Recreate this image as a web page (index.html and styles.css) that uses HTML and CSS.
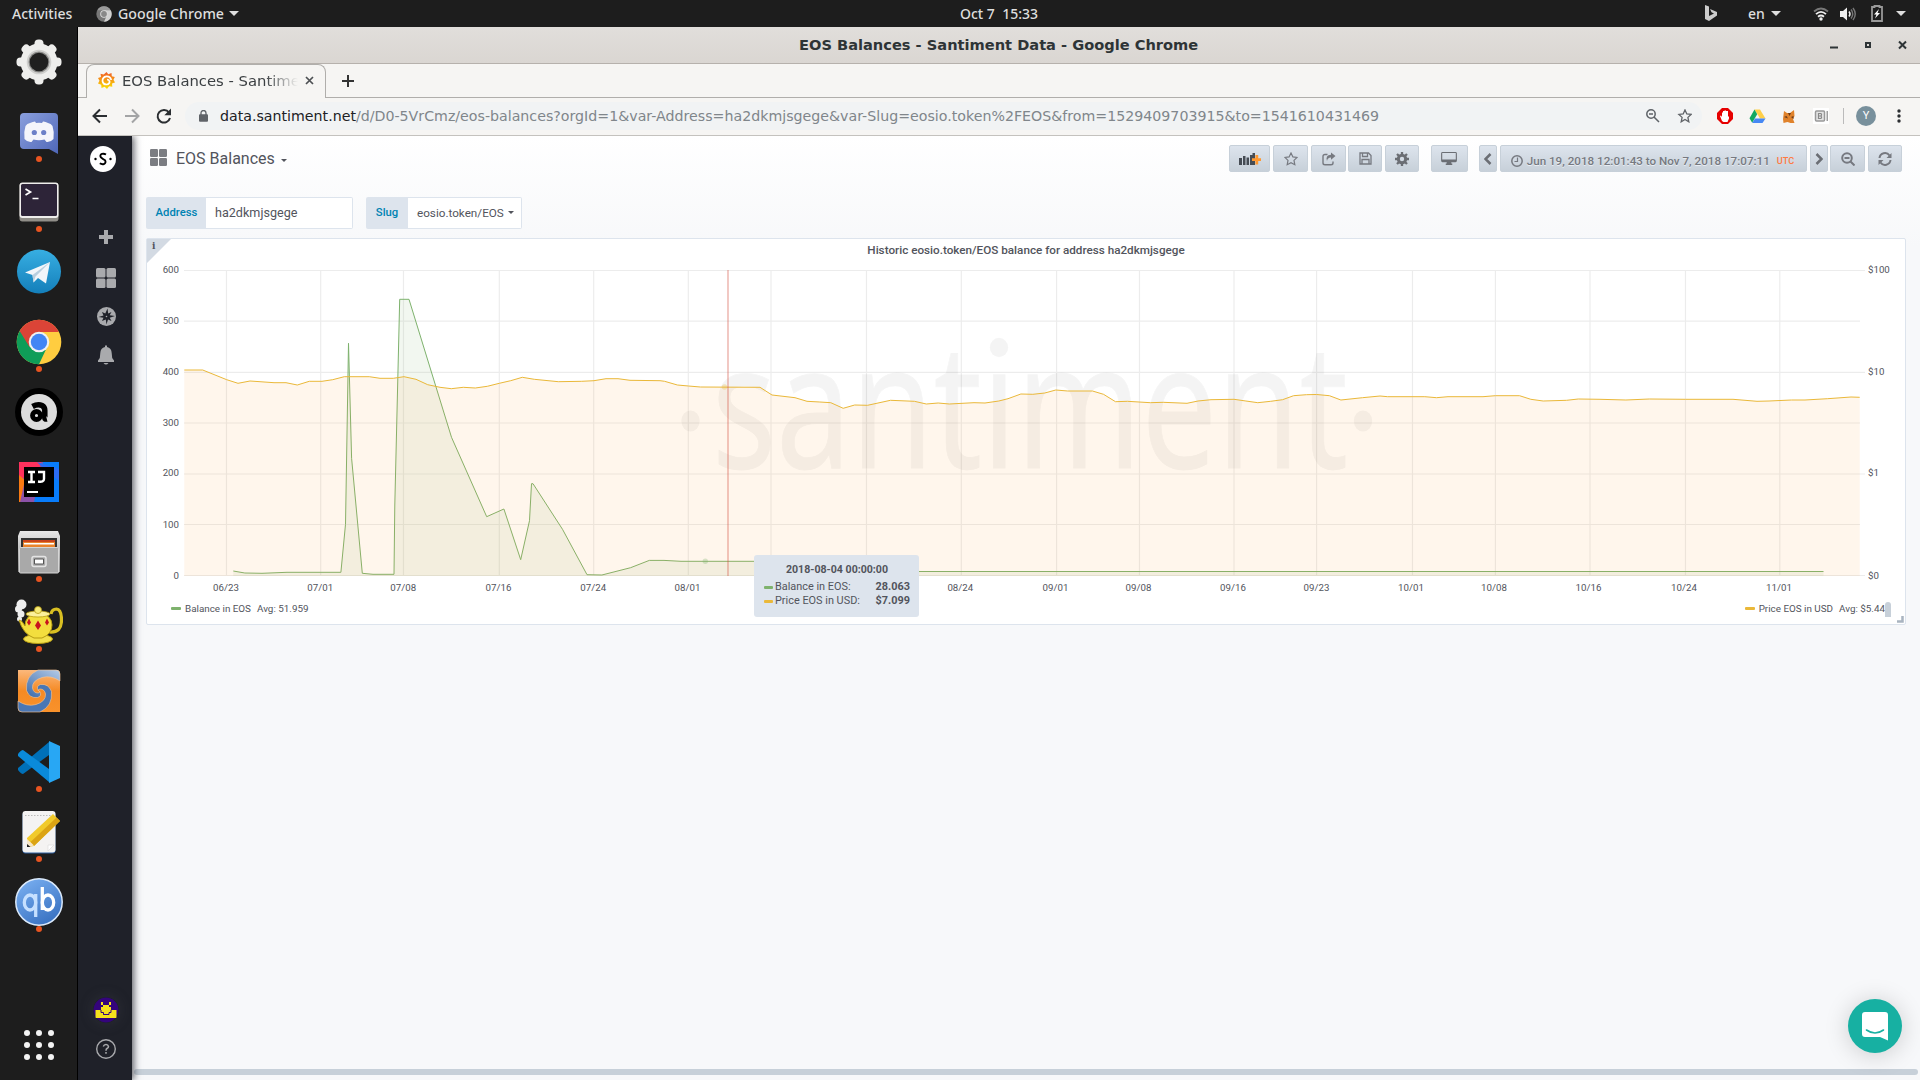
FILE: index.html
```html
<!DOCTYPE html>
<html lang="en">
<head>
<meta charset="utf-8">
<title>EOS Balances - Santiment Data</title>
<link rel="stylesheet" href="styles.css">
</head>
<body>
<header class="topbar">
  <span class="tb-activities">Activities</span>
  <svg class="tb-chrome" width="16" height="16" viewBox="0 0 16 16"><circle cx="8" cy="8" r="7.7" fill="#777"/><path d="M1.3 4.2A7.7 7.7 0 0 1 14.7 4.2H8z" fill="#999"/><path d="M14.7 4.2A7.7 7.7 0 0 1 8 15.7L11.5 8 8 4.2z" fill="#d0d0d0"/><circle cx="8" cy="8" r="3.8" fill="#ddd"/><circle cx="8" cy="8" r="2.9" fill="#888"/></svg>
  <span class="tb-app">Google Chrome</span>
  <i class="caret tb-caret1"></i>
  <span class="tb-clock">Oct 7&nbsp; 15:33</span>
  <div class="tray">
    <svg width="12" height="17" viewBox="0 0 12 17"><path d="M0 0l4 1.500V11l5-2.500-2.500-1.200L5 4l7 3v3.500L4 16l-4-2z" fill="#ccc"/></svg>
    <span class="tb-lang">en</span>
    <i class="caret tb-caret2"></i>
    <svg class="t-wifi" width="16" height="14" viewBox="0 0 16 14" fill="none" stroke-width="1.800"><path d="M1 4.500Q8-1.500 15 4.500" stroke="#777"/><path d="M3 7.200Q8 2.500 13 7.200M5 9.700q3-2.500 6 0" stroke="#eee"/><circle cx="8" cy="12" r="1.700" fill="#eee"/></svg>
    <svg class="t-vol" width="17" height="14" viewBox="0 0 17 14"><path d="M0 4h3l4-3.500v13L3 10H0z" fill="#eee"/><path d="M9 4.500q2 2.500 0 5" fill="none" stroke="#eee" stroke-width="1.500"/><path d="M11 2.500q3.500 4.500 0 9M13 1q4.500 6 0 12" fill="none" stroke="#777" stroke-width="1.400"/></svg>
    <svg class="t-bat" width="12" height="17" viewBox="0 0 12 17"><path d="M3.500 2V1h5v1H11v14H1V2z" fill="none" stroke="#999" stroke-width="1.800"/><path d="M8 4L3 9.500h2.500L4 13.500 9 8H6.500z" fill="#fff"/></svg>
    <i class="caret"></i>
  </div>
</header>
<div class="desktop">
  <nav class="dock">
    <div class="app"><svg width="48" height="48" viewBox="0 0 48 48"><g fill="#eeeeec"><circle cx="24" cy="24" r="18.500"/><g id="teeth"><rect x="19.500" y="1.500" width="9" height="45" rx="4"/><rect x="1.500" y="19.500" width="45" height="9" rx="4"/></g><use href="#teeth" transform="rotate(45 24 24)"/></g><circle cx="24" cy="24" r="12.300" fill="#cfcfcd"/><circle cx="24" cy="24" r="10.500" fill="#8a8a88"/><circle cx="24" cy="24" r="9.300" fill="#1f1f1f"/></svg></div>
    <div class="app running"><svg width="48" height="48" viewBox="0 0 48 48"><defs><linearGradient id="dc" x1="0" y1="0" x2="1" y2="1"><stop offset="0" stop-color="#8a9fdd"/><stop offset="1" stop-color="#4f67b8"/></linearGradient></defs><path d="M9 5h30q4 0 4 4v37l-9-5H9q-4 0-4-4V9q0-4 4-4z" fill="url(#dc)"/><path d="M15 15q-3 .500-4.500 3Q8.500 24 9.500 31q3 3.500 7 3l2-2.500q5.500 1.500 11 0l2 2.500q4 .5 7-3 1-7-1-13-1.500-2.500-4.500-3-3-1.700-5-1.500l-1 1.500q-3-.6-6 0l-1-1.500q-2 0-5 1.500z" fill="#f4f5fb"/><circle cx="19.300" cy="24.500" r="2.600" fill="#6c80c8"/><circle cx="28.700" cy="24.500" r="2.600" fill="#6c80c8"/></svg></div>
    <div class="app running"><svg width="48" height="48" viewBox="0 0 48 48"><rect x="4.500" y="5" width="39" height="38.500" rx="3" fill="#908e88"/><rect x="4.500" y="4.500" width="39" height="35.500" rx="3" fill="#efeeec"/><rect x="6" y="6" width="36" height="32" rx="1.500" fill="#2d2438"/><path d="M10.500 11l5 3-5 3M17.500 20.500h6" fill="none" stroke="#fff" stroke-width="1.700"/></svg></div>
    <div class="app"><svg width="48" height="48" viewBox="0 0 48 48"><defs><linearGradient id="tg" x2="0" y2="1"><stop stop-color="#37aee2"/><stop offset="1" stop-color="#147fba"/></linearGradient></defs><circle cx="24" cy="23.500" r="22" fill="url(#tg)"/><path d="M10 24.500l25-10.500-4 21.500-8-5.500-4.500 4.500-1-7.500z" fill="#f2f6fa"/><path d="M17.500 27L35 14 20.500 28.500 18.500 34.500z" fill="#b9cfdf"/></svg></div>
    <div class="app running"><svg width="48" height="48" viewBox="0 0 48 48"><circle cx="24" cy="24" r="22.300" fill="#ffcd40"/><path d="M24 24L4.700 12.900A22.300 22.300 0 0 0 24 46.300l8.500-18z" fill="#0f9d58"/><path d="M4.700 12.900A22.300 22.300 0 0 1 43.300 12.900L43.500 14H24l-9.500 15z" fill="#db4437"/><circle cx="24" cy="24" r="10.300" fill="#f1f1f1"/><circle cx="24" cy="24" r="8.200" fill="#4285f4"/></svg></div>
    <div class="app"><svg width="48" height="48" viewBox="0 0 48 48"><circle cx="24" cy="24" r="24" fill="#000"/><circle cx="24" cy="24" r="18" fill="#dcdcdc"/><path d="M17.500 18.500Q23 15.500 27 17.500q2.800 1.500 2.800 5V30q0 1.500 2 1" fill="none" stroke="#000" stroke-width="5.500"/><circle cx="21.500" cy="27.500" r="4" fill="none" stroke="#000" stroke-width="4.800"/></svg></div>
    <div class="app"><svg width="48" height="48" viewBox="0 0 48 48"><path d="M4 4h40v40H4z" fill="#087cfa"/><path d="M4 4h24L19 44H4z" fill="#8c52a8"/><path d="M4 4h22l-2 8L4 22z" fill="#fe315d"/><path d="M4 17l6 5-5 22H4z" fill="#f97a12"/><path d="M22 4l22 7v12L28 10z" fill="#2b6cf5"/><rect x="9" y="9" width="30" height="30" fill="#000"/><path d="M13 14h7M13 24h7M16.500 14v10M23 14h6v7q0 3.500-6 2.500" fill="none" stroke="#fff" stroke-width="2.400"/><path d="M12 34h11" stroke="#fff" stroke-width="2"/></svg></div>
    <div class="app running"><svg width="48" height="48" viewBox="0 0 48 48"><defs><linearGradient id="fl" x2="0" y2="1"><stop stop-color="#e8e8e8"/><stop offset="1" stop-color="#919191"/></linearGradient></defs><path d="M5 3h38l2 5v36H3V8z" fill="url(#fl)"/><path d="M6 10h36v10H6z" fill="#333"/><path d="M8 12h32v8H8z" fill="#e9842c"/><path d="M8 12h32v2H8z" fill="#c8441c"/><path d="M9 15h30v1.500H9z" fill="#fff"/><rect x="4.500" y="19.500" width="39" height="25.500" rx="1" fill="#a9a9a9" stroke="#d5d5d5"/><rect x="17" y="28.500" width="14" height="10" rx="2" fill="#aaa" stroke="#e4e4e4" stroke-width="1.500"/><path d="M19.500 31h9v5h-9z" fill="#fff" stroke="#555"/></svg></div>
    <div class="app running"><svg width="48" height="48" viewBox="0 0 48 48"><g fill="#eee"><circle cx="6.500" cy="6.500" r="5"/><circle cx="3.500" cy="11" r="3.500"/><circle cx="6" cy="16" r="3.500"/><circle cx="4.500" cy="21" r="2.500"/></g><path d="M36 16q1-5 5.500-5 5 .5 5 11 0 13-12 12" fill="none" stroke="#d9bf22" stroke-width="3.200"/><ellipse cx="23" cy="41" rx="14.500" ry="4.500" fill="#f2e04c" stroke="#b79c12"/><path d="M4 22q3 0 6 6 0-11 13-14 14 3 14 13 0 9-10 13h-8Q8 36 4 22z" fill="#f3de3e" stroke="#b79c12"/><ellipse cx="23" cy="16" rx="12" ry="3" fill="#fbf09a" stroke="#b79c12" stroke-width=".8"/><circle cx="23" cy="12" r="3.500" fill="#f8ec7a" stroke="#b79c12" stroke-width=".8"/><path d="M23 22.500l3 5-3 4.500-3-4.500zM14 20.500l2 4-2 3-2-3zM32 20.500l2 4-2 3-2-3z" fill="#c8141e"/></svg></div>
    <div class="app"><svg width="48" height="48" viewBox="0 1 48 48"><defs><linearGradient id="sb" x1="1" x2=".2" y2="1"><stop stop-color="#b4cbe8"/><stop offset="1" stop-color="#4672ae"/></linearGradient><linearGradient id="so" x2="0" y2="1"><stop stop-color="#fbb87c"/><stop offset=".5" stop-color="#f58a24"/><stop offset="1" stop-color="#f9922b"/></linearGradient></defs><path d="M3 3h38q4 0 4 4v38H7q-4 0-4-4z" fill="url(#so)"/><path id="swirl" d="M23 3h18q4 0 4 4v7Q36 8 27 10.500q-10 3-9.500 10.500 1 5 5.500 5 2 0 1.500-2 3 5-2 6.500-8 1-11-7Q10 9 23 3z" fill="url(#sb)" stroke="#fbc894" stroke-width=".6"/><path d="M23 3h18q4 0 4 4v7Q36 8 27 10.500q-10 3-9.500 10.500 1 5 5.500 5 2 0 1.500-2 3 5-2 6.500-8 1-11-7Q10 9 23 3z" fill="#4a77b4" stroke="#fbc894" stroke-width=".6" transform="rotate(180 24 24)"/></svg></div>
    <div class="app running"><svg width="48" height="48" viewBox="0 0 48 48"><path d="M34 4v13L8 36q-2 0-5-4v-2z" fill="#0070b8"/><path d="M34 44V31L8 12q-2 0-5 4v2z" fill="#0a8ada"/><path d="M34 3l11 5v32l-11 5z" fill="#28a7f4"/></svg></div>
    <div class="app running"><svg width="48" height="48" viewBox="0 0 48 48"><rect x="7.500" y="4" width="33" height="41.500" rx="3" fill="#2f5f9e"/><rect x="7.500" y="3" width="33" height="41.500" rx="3" fill="#f4f3f2"/><path d="M10 7.500h28" stroke="#bbb" stroke-dasharray="1.500 1.500"/><path d="M33 43v-6h6z" fill="#fff" stroke="#ddd" stroke-width=".7"/><path d="M12 30L38 6l7 7-26 25-7 1z" fill="#f1ca2b"/><path d="M15.500 34L41.500 9.500 45 13 19 38z" fill="#dba414"/><path d="M12 31v8l7-1.500z" fill="#f6e6c8"/><path d="M12 36v3h3.500z" fill="#222"/></svg></div>
    <div class="app running"><svg width="48" height="48" viewBox="0 0 48 48"><defs><linearGradient id="qb" x1=".2" x2=".8" y2="1"><stop stop-color="#78aef0"/><stop offset="1" stop-color="#356ebf"/></linearGradient></defs><circle cx="24" cy="24" r="23.200" fill="url(#qb)" stroke="#dae9fb" stroke-width="1.500"/><g fill="none" stroke-width="3.300"><ellipse cx="15" cy="24.500" rx="5.700" ry="7.500" stroke="#c6e0ff"/><path d="M20.700 16v23" stroke="#c6e0ff"/><ellipse cx="33" cy="24.500" rx="5.700" ry="7.500" stroke="#fff"/><path d="M27.300 9v23" stroke="#fff"/></g></svg></div>
    <div class="apps-grid"><b></b><b></b><b></b><b></b><b></b><b></b><b></b><b></b><b></b></div>
  </nav>
  <section class="window">
    <div class="titlebar">
      <span class="win-title">EOS Balances - Santiment Data - Google Chrome</span>
      <svg class="win-ctl" width="78" height="10" viewBox="0 0 78 10"><path d="M0 7.500h8M69 1.500l7 7M76 1.500l-7 7" stroke="#2e3436" stroke-width="2" fill="none"/><rect x="36" y="3" width="4" height="4" fill="none" stroke="#2e3436" stroke-width="2"/></svg>
    </div>
    <div class="tabstrip">
      <div class="tab">
        <svg width="17" height="17" viewBox="0 0 17 17"><defs><linearGradient id="gf" x2="0" y2="1"><stop stop-color="#f05a28"/><stop offset="1" stop-color="#fbe400"/></linearGradient></defs><path d="M8.500 0l1.800 2.300L13.500 1l.3 3.200 3 .8-1.300 2.700 1.500 2.800-3 1 .3 3.200-3.200-.5L9 17l-2.300-2.300L3.500 16l-.3-3.300L0 11.500l1.500-2.800L0 6l3-1-.5-3.300 3.200.8z" fill="url(#gf)"/><path d="M13.300 8Q12 4.200 8.500 4.400q-4 .6-4 4.600.6 3.600 4.200 3.500 3-.5 2.900-3-.5-2-2.500-1.900" fill="none" stroke="#fff" stroke-width="1.700"/></svg>
        <span class="tab-title">EOS Balances - Santime</span>
        <svg class="tab-x" width="9" height="9" viewBox="0 0 9 9"><path d="M1 1l7 7M8 1L1 8" stroke="#4d5053" stroke-width="1.700"/></svg>
      </div>
      <svg class="tab-new" width="12" height="12" viewBox="0 0 12 12"><path d="M6 0v12M0 6h12" stroke="#333" stroke-width="2"/></svg>
    </div>
    <div class="toolbar">
      <svg class="nav-icons" width="80" height="18" viewBox="0 0 80 18" fill="none" stroke-width="2"><path d="M15 9H2M8 2.500L1.500 9 8 15.500" stroke="#2b2e31"/><path d="M33 9h13M40 2.500L46.500 9 40 15.500" stroke="#a3a4a5"/><path d="M77 5.500A6.300 6.300 0 1 0 78 11" stroke="#2b2e31"/><path d="M79 1.500v6.700h-6.700z" fill="#2b2e31"/></svg>
      <div class="omnibox">
        <svg width="9" height="12" viewBox="0 0 9 12"><rect y="4.200" width="9" height="7.600" rx="1" fill="#5f6368"/><path d="M2 5V3a2.500 2.500 0 0 1 5 0v2" fill="none" stroke="#5f6368" stroke-width="1.300"/></svg>
        <span class="url"><b>data.santiment.net</b>/d/D0-5VrCmz/eos-balances?orgId=1&amp;var-Address=ha2dkmjsgege&amp;var-Slug=eosio.token%2FEOS&amp;from=1529409703915&amp;to=1541610431469</span>
        <svg class="omni-icons" width="46" height="14" viewBox="0 0 46 14" fill="none" stroke="#5f6368" stroke-width="1.500"><circle cx="5" cy="5" r="4.200"/><path d="M8 8l5 5M3 5h4"/><path d="M39 .9l1.800 4.100 4.300.4-3.200 3 .9 4.400-3.800-2.300-3.800 2.300.9-4.400-3.200-3 4.300-.4z" stroke-width="1.300"/></svg>
      </div>
      <svg class="ext" width="112" height="16" viewBox="0 0 112 16"><path d="M5 0h6l5 5v6l-5 5H5l-5-5V5z" fill="#e60000"/><path d="M5 13L3 8l1-.5 1 1.500V4.500h1V3h1.500v-.5h1.500V3H11v5.500h1v2L10.500 14h-4z" fill="#fff"/><path d="M37.500 1.500h5.500l5.500 9h-5.500z" fill="#ffcf48"/><path d="M37.500 1.500l2.700 4.800-5 8.500-2.700-4.500z" fill="#11a861"/><path d="M38 10.500h10.500l-3 4.500H35.200z" fill="#4688f4"/><path d="M67 3l3 2h3l4-3 .5 6-1.500 3 1.500 4h-4l-3-1-4 1-.5-4z" fill="#e0822a"/><path d="M71 5h3l-1.500 3zM67 9l2.500-1 1.500 2.500zM74 9l2.500-1v3z" fill="#6a3a1b"/><rect x="96" width="16" height="16" fill="#fff"/><rect x="98.500" y="3" width="9" height="10" rx="1" fill="#e4e4e4" stroke="#999" stroke-width="1.500"/><path d="M101.500 5.500h2.500q1.200 1.200 0 2.500 1.200 1.200 0 2.500h-2.500zM101.500 8h2.500M110.200 3v10" fill="none" stroke="#888" stroke-width="1.200"/></svg>
      <i class="ext-sep"></i>
      <span class="profile">Y</span>
      <svg width="4" height="14" viewBox="0 0 4 14" fill="#2b2e31"><circle cx="2" cy="2" r="1.700"/><circle cx="2" cy="7" r="1.700"/><circle cx="2" cy="12" r="1.700"/></svg>
    </div>
    <div class="page">
      <aside class="sidemenu">
        <svg class="logo" width="26" height="26" viewBox="0 0 26 26"><circle cx="13" cy="13" r="13" fill="#fff"/><circle cx="5.500" cy="13" r="1.200"/><circle cx="20.500" cy="13" r="1.200"/><path d="M16 8.500q-2-1.200-4-.6-2.500 1-1.200 3.300Q13 13 15 14.300q1.500 2.500-1.200 3.800-2 .5-4-.8" fill="none" stroke="#000" stroke-width="1.900"/></svg>
        <svg class="s-plus" width="14" height="14" viewBox="0 0 14 14"><path d="M7 0v14M0 7h14" stroke="#a9aaad" stroke-width="4"/></svg>
        <svg class="s-grid" width="20" height="20" viewBox="0 0 20 20" fill="#a9aaad"><rect width="9.500" height="9.500" rx="1.500"/><rect x="10.500" width="9.500" height="9.500" rx="1.500"/><rect y="10.500" width="9.500" height="9.500" rx="1.500"/><rect x="10.500" y="10.500" width="9.500" height="9.500" rx="1.500"/></svg>
        <svg class="s-comp" width="19" height="19" viewBox="0 0 19 19"><circle cx="9.500" cy="9.500" r="9.500" fill="#a9aaad"/><path d="M10.500 1.500l.7 5 3.300-1.500-1.800 3.200 5.300.8-5.300 1.800 1.800 3.200-3.500-1.500-1.500 5-.7-5L5 14l1.500-3.200L1.500 10l5-1.500L5 5l3.300 1.500z" fill="#1f2129"/><circle cx="9.500" cy="9.500" r=".8" fill="#a9aaad"/></svg>
        <svg class="s-bell" width="16" height="20" viewBox="0 0 16 20" fill="#a9aaad"><path d="M7 2V.5h2V2q4.500 1 4.700 6l.5 5 1.800 2.500V17H0v-1.500L1.800 13l.5-5Q2.500 3 7 2zM5.500 18h5q-2.500 3-5 0z"/></svg>
        <svg class="avatar" width="26" height="26" viewBox="0 0 26 26"><circle cx="13" cy="13" r="12.500" fill="#34047c"/><path d="M2.500 13H8v-3h2V8h6v2h2v3h5.500v8h-21zM8 5h2v3H8zM16 5h2v3h-2z" fill="#f6e21c"/><path d="M8 13v2.500h2.500v2H16v-2h2V13M10.500 17.500h5" fill="none" stroke="#34047c"/></svg>
        <svg class="help" width="20" height="20" viewBox="0 0 20 20" fill="none" stroke="#a9aaad"><circle cx="10" cy="10" r="9.300" stroke-width="1.400"/><path d="M7.300 7.500Q8 5.500 10 5.500t2.500 2q0 1.200-1.500 2-1 .6-1 2.200M10 13v1.700" stroke-width="1.500"/></svg>
      </aside>
      <main class="main">
        <div class="navbar">
          <svg width="17" height="17" viewBox="0 0 17 17" fill="#7b7d82"><rect width="8" height="8" rx="1.200"/><rect x="9" width="8" height="8" rx="1.200"/><rect y="9" width="8" height="8" rx="1.200"/><rect x="9" y="9" width="8" height="8" rx="1.200"/></svg>
          <span class="dash-title">EOS Balances</span><i class="caret dash-caret"></i>
          <div class="btns">
            <span class="btn b-add"><svg width="22" height="14" viewBox="0 0 22 14"><path d="M0 13V6h3v7zM4 13V4h2.500v9zM7.500 13V5.500H10V13zM11 13V3h2.500v10zM13.500 13V1H16v12z" fill="#464c54"/><path d="M17.800 3v9.500M13 7.700h9" stroke="#ff9830" stroke-width="2.800"/></svg></span>
            <span class="btn b-star"><svg width="14" height="14" viewBox="0 0 14 14"><path d="M7 1l1.900 3.900 4.200.5-3.100 3 .8 4.300L7 10.600l-3.800 2.100.8-4.300-3.100-3 4.200-.5z" fill="none" stroke="#767980" stroke-width="1.200"/></svg></span>
            <span class="btn b-share"><svg width="14" height="14" viewBox="0 0 14 14"><path d="M5.500 2.500H3q-2 0-2 2V11q0 1.800 2 1.800h6q2 0 2-1.800V9.500" fill="none" stroke="#767980" stroke-width="1.400"/><path d="M9 .5L13.500 4 9 7.700V5.500Q5.500 5.500 5 9 3 3 9 2.700z" fill="#767980"/></svg></span>
            <span class="btn b-save"><svg width="13" height="13" viewBox="0 0 13 13" fill="none" stroke="#767980" stroke-width="1.300"><path d="M1 1h8.500L12 3.500V12H1zM3.500 1v3.500H8.500V1M3 12V7.500h7V12"/></svg></span>
            <span class="btn b-cog"><svg width="14" height="14" viewBox="0 0 14 14"><circle cx="7" cy="7" r="3.700" fill="none" stroke="#6b6e74" stroke-width="3"/><path d="M7 0v2.500M7 11.500V14M0 7h2.500M11.500 7H14M2 2l2 2M10 10l2 2M12 2l-2 2M4 10l-2 2" stroke="#6b6e74" stroke-width="2.300"/></svg></span>
            <span class="btn b-tv"><svg width="16" height="13" viewBox="0 0 17 14"><path d="M1.500 0h14q1.500 0 1.500 1.500v8q0 1.500-1.500 1.500H11v1.500h1V14H5v-1.500h1V11H1.500Q0 11 0 9.500v-8Q0 0 1.500 0zM1.200 1.200v7h14.600v-7z" fill="#6b6e74" fill-rule="evenodd"/></svg></span>
            <span class="btn b-prev"><svg width="8" height="12" viewBox="0 0 8 12"><path d="M6.500 1l-5 5 5 5" fill="none" stroke="#6b6e74" stroke-width="2.500"/></svg></span>
            <span class="btn b-time"><svg width="12" height="12" viewBox="0 0 12 12" fill="none" stroke="#767980" stroke-width="1.500"><circle cx="6" cy="6" r="5.200"/><path d="M6.500 2.500V6.500H3.500" stroke-width="1.200"/></svg><span class="range">Jun 19, 2018 12:01:43 to Nov 7, 2018 17:07:11</span><span class="utc">UTC</span></span>
            <span class="btn b-next"><svg width="8" height="12" viewBox="0 0 8 12"><path d="M1.500 1l5 5-5 5" fill="none" stroke="#6b6e74" stroke-width="2.500"/></svg></span>
            <span class="btn b-zoom"><svg width="14" height="14" viewBox="0 0 14 14" fill="none" stroke="#767980" stroke-width="2"><circle cx="6" cy="6" r="4.800"/><path d="M9.500 9.500l4 4M3.500 6h5"/></svg></span>
            <span class="btn b-ref"><svg width="14" height="14" viewBox="0 0 14 14"><path d="M1.500 6A5.500 5.500 0 0 1 11.500 3.500M12.500 8A5.500 5.500 0 0 1 2.500 10.500" fill="none" stroke="#767980" stroke-width="2"/><path d="M13.500 1v5h-5zM.5 13V8h5z" fill="#767980"/></svg></span>
          </div>
        </div>
        <div class="submenu">
          <label class="field"><span class="lbl l-addr">Address</span><span class="val v-addr">ha2dkmjsgege</span></label>
          <label class="field"><span class="lbl l-slug">Slug</span><span class="val v-slug">eosio.token/EOS<i class="caret"></i></span></label>
        </div>
        <div class="panel">
          <span class="corner"><b>i</b></span>
          <div class="panel-title">Historic eosio.token/EOS balance for address ha2dkmjsgege</div>
          <svg class="chart" width="1758" height="338" viewBox="147 262 1758 338">
            <g class="watermark"><text x="712" y="467.500" textLength="636" lengthAdjust="spacingAndGlyphs">santıment</text><ellipse cx="999" cy="347.500" rx="9.200" ry="9.700"/><ellipse cx="690.500" cy="421" rx="9.200" ry="10.500"/><ellipse cx="1363" cy="421" rx="9.200" ry="10.500"/></g>
            <path class="grid" d="M184 270.500h1681M184 321.200h1676M184 372.300h1681M184 423h1676M184 474h1681M184 524.500h1676M184 575.500h1681M226.500 270v306M320.700 270v306M403.500 270v306M499.300 270v306M593.700 270v306M688.300 270v306M771 270v306M866.500 270v306M961.300 270v306M1056.600 270v306M1139.500 270v306M1234 270v306M1316.600 270v306M1412.500 270v306M1495.400 270v306M1590 270v306M1685.500 270v306M1779.800 270v306"/>
            <path class="green-fill" d="M233.300 571L244.800 573 262 573.300 287 572.300H340.900L345.500 524.300 348.500 343.300 351.600 458.300 362.300 573.300 373 574.300H394L394.800 505 399.700 299.300H409L451.500 437.300 486.700 516.700 503.900 509 520.700 559.700 529.500 520.700 531.500 483.700H533L562.500 529.300 587 574.700 601.900 575 630.600 567.700 649.300 560.400H664L681 561.300H790L820 571.500H1823.500V576H233.300z"/>
            <path class="green-line" d="M233.300 571L244.800 573 262 573.300 287 572.300H340.900L345.500 524.300 348.500 343.300 351.600 458.300 362.300 573.300 373 574.300H394L394.800 505 399.700 299.300H409L451.500 437.300 486.700 516.700 503.900 509 520.700 559.700 529.500 520.700 531.500 483.700H533L562.500 529.300 587 574.700 601.900 575 630.600 567.700 649.300 560.400H664L681 561.300H790L820 571.500H1823.500"/>
            <path class="gold-fill" d="M184.300 370H202.700L226.700 379.700 238 383.300 250 381 274 382.700H286L297.300 385 309.300 381.300H322L332.700 379.700 344.300 376.700H369.300L380 378.300H393.300L404 376.700 416 379.300 427.700 384.700 440 387.300 451.300 388.700 463.300 387.300 475.300 388 487.300 386.300 499.300 383.300 510.700 380.700 522.300 377.300 534.300 379.300 558.300 381.700 581.700 381.300 594 380.700 606 378.700H618L630 380.300 660 380.700 664.600 381.300 677.400 385 688.500 386 700.400 387 760 387.300 772 395 795 397.700 807 401.300 819.800 402 830.800 402.700 843.200 408.300 854.700 405 867.500 405.300 890.500 400.300 914.400 401.300 926.300 404 938.200 403 949.300 404 974 402.700 985 403 998.800 401 1008 398.700 1020.900 394 1032.800 394.300 1044.800 393 1055.800 390 1067.700 391H1092.500L1103.500 394.300 1115.500 401.700 1127.400 401.300 1150.400 402.700 1163.200 402.300 1187 403.300 1198 401 1211 399.700 1234 399.300 1245.900 401 1257.800 402.700 1270.700 401.300 1282.600 399.700 1293.600 395.700 1306.500 394.700 1316.600 394.500 1329.400 395.700 1340.900 400 1362.500 397.700 1380 396 1387.600 396.700H1424.800L1436.500 397.700 1448 396.700H1483L1495.400 395.700H1519.500L1530.800 399.300 1543.200 401 1566.600 400.300 1578.300 399 1600 399.300 1625.900 400 1649.300 399 1685.400 399.300H1733L1757 401.300 1769 401 1791.500 400H1805L1827.700 398.700 1851 397 1859.700 397.300V576H184.300z"/>
            <path class="gold-line" d="M184.300 370H202.700L226.700 379.700 238 383.300 250 381 274 382.700H286L297.300 385 309.300 381.300H322L332.700 379.700 344.300 376.700H369.300L380 378.300H393.300L404 376.700 416 379.300 427.700 384.700 440 387.300 451.300 388.700 463.300 387.300 475.300 388 487.300 386.300 499.300 383.300 510.700 380.700 522.300 377.300 534.300 379.300 558.300 381.700 581.700 381.300 594 380.700 606 378.700H618L630 380.300 660 380.700 664.600 381.300 677.400 385 688.500 386 700.400 387 760 387.300 772 395 795 397.700 807 401.300 819.800 402 830.800 402.700 843.200 408.300 854.700 405 867.500 405.300 890.500 400.300 914.400 401.300 926.300 404 938.200 403 949.300 404 974 402.700 985 403 998.800 401 1008 398.700 1020.900 394 1032.800 394.300 1044.800 393 1055.800 390 1067.700 391H1092.500L1103.500 394.300 1115.500 401.700 1127.400 401.300 1150.400 402.700 1163.200 402.300 1187 403.300 1198 401 1211 399.700 1234 399.300 1245.900 401 1257.800 402.700 1270.700 401.300 1282.600 399.700 1293.600 395.700 1306.500 394.700 1316.600 394.500 1329.400 395.700 1340.900 400 1362.500 397.700 1380 396 1387.600 396.700H1424.800L1436.500 397.700 1448 396.700H1483L1495.400 395.700H1519.500L1530.800 399.300 1543.200 401 1566.600 400.300 1578.300 399 1600 399.300 1625.900 400 1649.300 399 1685.400 399.300H1733L1757 401.300 1769 401 1791.500 400H1805L1827.700 398.700 1851 397 1859.700 397.300"/>
            <circle cx="705.300" cy="561.300" r="2.700" fill="#7eb26d" opacity=".3"/><circle cx="724.500" cy="387" r="2.700" fill="#eab839" opacity=".3"/>
            <path class="cross" d="M728 270v306"/>
            <g class="axis end"><text x="179" y="273">600</text><text x="179" y="324">500</text><text x="179" y="375">400</text><text x="179" y="426">300</text><text x="179" y="476">200</text><text x="179" y="528">100</text><text x="179" y="579">0</text></g>
            <g class="axis"><text x="1868" y="273">$100</text><text x="1868" y="375">$10</text><text x="1868" y="476">$1</text><text x="1868" y="579">$0</text></g>
            <g class="axis mid"><text x="226" y="591">06/23</text><text x="320.200" y="591">07/01</text><text x="403.200" y="591">07/08</text><text x="498.500" y="591">07/16</text><text x="593.200" y="591">07/24</text><text x="687.500" y="591">08/01</text><text x="960.300" y="591">08/24</text><text x="1055.500" y="591">09/01</text><text x="1138.500" y="591">09/08</text><text x="1233" y="591">09/16</text><text x="1316.500" y="591">09/23</text><text x="1411" y="591">10/01</text><text x="1494" y="591">10/08</text><text x="1588.500" y="591">10/16</text><text x="1684" y="591">10/24</text><text x="1779" y="591">11/01</text></g>
          </svg>
          <div class="legend">
            <i class="dash green"></i><span>Balance in EOS</span><span class="avg">Avg: 51.959</span>
            <i class="dash gold"></i><span>Price EOS in USD</span><span class="avg">Avg: $5.44</span><i class="thumb"></i>
          </div>
          <div class="tooltip">
            <div class="tt-time">2018-08-04 00:00:00</div>
            <div class="tt-row"><i class="dash green"></i><span>Balance in EOS:</span><b>28.063</b></div>
            <div class="tt-row"><i class="dash gold"></i><span>Price EOS in USD:</span><b>$7.099</b></div>
          </div>
          <svg class="resize" width="7" height="7" viewBox="0 0 7 7"><path d="M5.500 0v5.500H0" fill="none" stroke="#a9b4c0" stroke-width="2.500"/></svg>
        </div>
        <div class="hscroll"></div>
        <div class="chat"><svg width="26" height="29" viewBox="0 0 26 29"><path d="M3 0h20q3 0 3 3v25.500L18 25H3q-3 0-3-3V3q0-3 3-3z" fill="#fff"/><path d="M4.500 18q8.500 6 17 0" fill="none" stroke="#17b0a2" stroke-width="1.600" stroke-linecap="round"/></svg></div>
      </main>
    </div>
  </section>
</div>
</body>
</html>
```
FILE: styles.css
```css
* { box-sizing: border-box; }
body { margin: 0; width: 1920px; height: 1080px; overflow: hidden; font-family: Roboto, sans-serif; background: #1d1d1d; }
svg { display: block; flex: none; }
i { font-style: normal; flex: none; }
span { white-space: nowrap; }

.topbar { position: relative; height: 27px; background: #1d1d1d; color: #dedede; display: flex; align-items: center; font: 500 14px/27px "Noto Sans", sans-serif; padding-left: 12px; }
.tb-activities { width: 84px; }
.tb-app { margin-left: 6px; width: 111px; font-size: 14.2px; }
.caret { display: inline-block; width: 0; height: 0; border: 5px solid transparent; border-top-color: currentColor; border-bottom: 0; }
.tb-clock { margin-left: 721px; }
.tray { margin-left: auto; margin-right: 14px; display: flex; align-items: center; }
.tb-lang { margin-left: 31px; width: 23px; }
.t-wifi { margin-left: 32px; }
.t-vol { margin-left: 11px; }
.t-bat { margin: 0 13px 0 14px; }

.desktop { display: flex; height: 1053px; }
.dock { width: 78px; background: #1d1d1d; border-right: 1px solid #000; display: flex; flex-direction: column; align-items: center; }
.app { width: 77px; height: 70px; display: flex; align-items: center; justify-content: center; position: relative; }
.running::after { content: ""; position: absolute; left: 36px; top: 59px; width: 6px; height: 6px; border-radius: 50%; background: #e95420; }
.apps-grid { display: grid; grid-template-columns: repeat(3, 6px); gap: 6px; margin-top: 93px; }
.apps-grid b { width: 6px; height: 6px; border-radius: 50%; background: #f4f4f4; }

.window { width: 1842px; display: flex; flex-direction: column; }
.titlebar { height: 37px; background: linear-gradient(#e1dedb, #dad6d2); border-bottom: 1px solid #b6b1ac; display: flex; align-items: center; padding-right: 12px; }
.win-title { margin-left: 721px; font: bold 14.61px/34px "DejaVu Sans", sans-serif; color: #2e3436; }
.win-ctl { margin-left: auto; }
.tabstrip { height: 34px; background: #f6f5f3; border-bottom: 1px solid #b0aeab; display: flex; align-items: flex-start; }
.tab { width: 240px; height: 34px; margin-left: 8px; border: 1px solid #b0aeab; border-bottom: 0; border-radius: 8px 8px 0 0; background: #f6f5f3; display: flex; align-items: center; padding: 0 0 2px 11px; }
.tab-title { margin-left: 7px; width: 177px; overflow: hidden; font: 14.8px/31px "DejaVu Sans", sans-serif; color: #3c4043; -webkit-mask-image: linear-gradient(90deg, #000 143px, transparent 176px); mask-image: linear-gradient(90deg, #000 143px, transparent 176px); }
.tab-x { margin-left: 6px; }
.tab-new { margin: 11px 0 0 16px; }
.toolbar { height: 38px; background: #f6f5f3; border-bottom: 1px solid #c4c2be; display: flex; align-items: center; padding: 0 19px 2px 14px; }
.omnibox { width: 1518px; height: 28px; margin-left: 13px; border-radius: 14px; background: #f1f3f4; display: flex; align-items: center; padding-left: 14px; }
.url { margin-left: 12px; width: 1226px; font: 14.19px/26px "DejaVu Sans", sans-serif; color: #80868b; }
.url b { font-weight: normal; color: #202124; }
.omni-icons { margin-left: 200px; }
.ext { margin-left: 15px; }
.ext-sep { width: 1px; height: 16px; margin-left: 14px; background: #bbb; }
.profile { width: 20px; height: 20px; margin: 0 21px 0 12px; border-radius: 50%; background: #78909c; color: #fff; font-size: 11px; line-height: 20px; text-align: center; }

.page { height: 944px; display: flex; overflow: hidden; }
.sidemenu { position: relative; z-index: 1; width: 54px; background: #1f2129; box-shadow: 2px 0 7px rgba(31, 33, 41, .7); display: flex; flex-direction: column; align-items: center; padding: 10px 0 21px 2px; }
.logo { margin-left: -6px; }
.s-plus { margin-top: 58px; }
.s-grid { margin-top: 24px; }
.s-comp { margin-top: 19px; }
.s-bell { margin-top: 19px; }
.avatar { margin-top: auto; border-radius: 50%; box-shadow: 0 0 14px rgba(80, 80, 90, .3); }
.help { margin-top: 16px; }

.main { position: relative; width: 1788px; background: linear-gradient(#fff, #f7f8fa 110px); padding: 0 14px; color: #52545c; }
.navbar { height: 61px; padding: 9px 4px 0 4px; display: flex; align-items: flex-start; }
.navbar > svg { margin-top: 4px; }
.dash-title { margin-left: 9px; font-size: 16px; line-height: 27px; }
.dash-caret { margin: 14px 0 0 6px; border-width: 3px; border-bottom: 0; }
.btns { margin-left: auto; display: flex; }
.btn { height: 27px; border: 1px solid #c7d0d9; border-radius: 2px; background: linear-gradient(#dde4ed, #c7d0d9); display: flex; align-items: center; justify-content: center; color: #767980; margin-left: 3px; }
.b-add { width: 41px; margin-left: 0; }
.b-star { width: 35px; }
.b-share { width: 35px; }
.b-save { width: 34px; margin-left: 2px; }
.b-cog { width: 34px; }
.b-tv { width: 37px; margin-left: 12px; padding-right: 2px; }
.b-prev { width: 18px; margin-left: 11px; }
.b-time { width: 307px; padding: 4px 2px 0 0; }
.b-next { width: 18px; }
.b-zoom { width: 35px; margin-left: 2px; }
.b-ref { width: 34px; }
.range { margin-left: 4px; font-size: 11.65px; font-weight: 500; text-shadow: 0 1px 0 #e8edf3; }
.utc { margin-left: 7px; font-size: 9.2px; font-weight: 500; color: #ff7941; }

.submenu { display: flex; height: 41px; gap: 13px; font-size: 11.7px; }
.field { display: flex; height: 32px; }
.lbl { background: #dde4ed; border-radius: 2px 0 0 2px; color: #0083b3; font-weight: 500; font-size: 11.300px; line-height: 31px; text-align: center; }
.l-addr { width: 60px; padding-left: 1px; }
.l-slug { width: 42px; }
.val { background: #fff; border: 1px solid #dde4ed; border-left: 0; border-radius: 0 2px 2px 0; line-height: 30px; }
.v-addr { width: 147px; padding-left: 9px; font-size: 12.600px; }
.v-slug { width: 114px; padding-left: 9px; line-height: 31px; }
.v-slug .caret { margin: 0 0 3px 4px; border-width: 3.500px; border-bottom: 0; }

.panel { position: relative; height: 387px; background: #fff; border: 1px solid #dde4ed; border-radius: 2px; }
.corner { position: absolute; left: 0; top: 0; width: 24px; height: 24px; background: #d3dae3; clip-path: polygon(0 0, 100% 0, 0 100%); font: bold 9px/14px "DejaVu Serif", serif; padding-left: 5px; }
.panel-title { height: 23px; text-align: center; font-size: 11.690px; font-weight: 500; line-height: 23px; }
.chart { font-family: Roboto, sans-serif; }
.watermark { fill: #000; opacity: .038; font: 174px "Noto Sans", sans-serif; }
.watermark text { stroke: #000; stroke-width: .8px; }
.grid { fill: none; stroke: #000; stroke-opacity: .075; stroke-width: 1.200; }
.green-fill { fill: #7eb26d; opacity: .1; }
.gold-fill { fill: #ffa028; opacity: .09; }
.green-line { fill: none; stroke: #7eb26d; stroke-width: 1; }
.gold-line { fill: none; stroke: #eab839; stroke-width: 1; }
.cross { stroke: #d44a3a; stroke-opacity: .5; stroke-width: 1.200; }
.axis { font-size: 9.700px; fill: #52545c; }
.end { text-anchor: end; }
.mid { text-anchor: middle; }
.legend { height: 17px; display: flex; align-items: center; font-size: 9.850px; padding: 0 14px 0 24px; }
.dash { width: 10px; height: 3px; border-radius: 1px; margin-right: 4px; }
.green { background: #7eb26d; }
.gold { background: #eab839; }
.legend .gold { margin-left: auto; }
.avg { margin-left: 6px; }
.thumb { width: 6px; height: 15px; background: #c7d0d9; border-radius: 3px 3px 0 0; margin-top: 2px; }
.tooltip { position: absolute; left: 607px; top: 316px; width: 165px; height: 62px; border-radius: 3px; background: #dde4ed; padding: 8px 9px 0 10px; font-size: 10.9px; line-height: 14px; }
.tt-time { text-align: center; font-size: 10.6px; font-weight: 700; margin-bottom: 3px; }
.tt-row { display: flex; align-items: center; }
.tt-row .dash { width: 9px; margin-right: 2px; }
.tt-row b { margin-left: auto; }
.resize { position: absolute; right: 1px; bottom: 1px; }
.hscroll { position: absolute; left: 2px; bottom: 5px; width: 1784px; height: 6px; border-radius: 3px; background: #c7d0d9; }
.chat { position: absolute; left: 1716px; top: 863px; width: 54px; height: 54px; border-radius: 50%; background: #17b0a2; box-shadow: 0 2px 24px rgba(0, 0, 0, .18); display: flex; align-items: center; justify-content: center; }
```
